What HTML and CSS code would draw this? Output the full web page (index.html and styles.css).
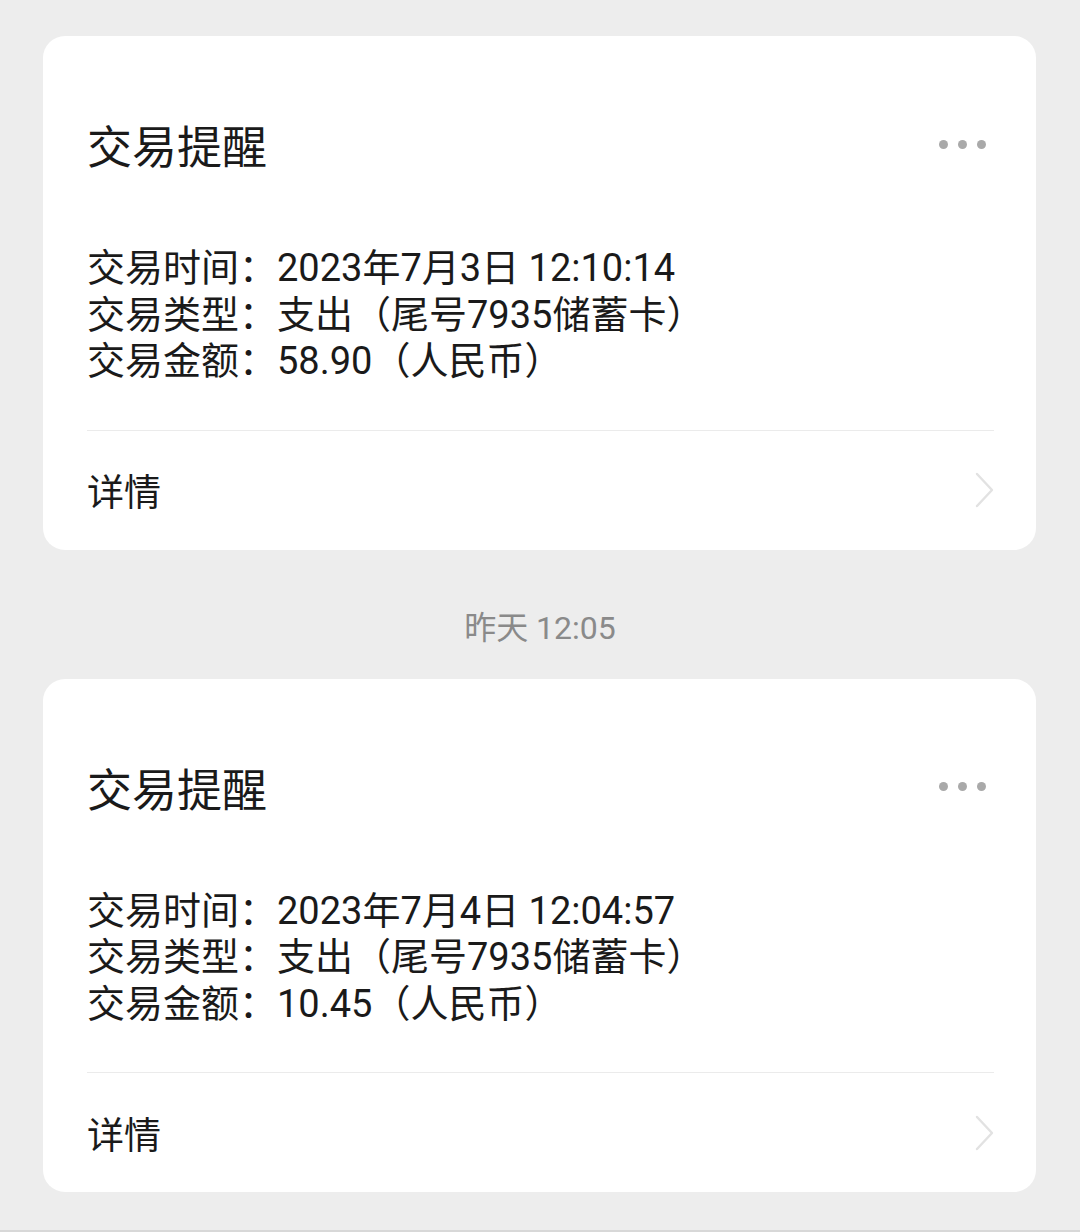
FILE: index.html
```html
<!DOCTYPE html>
<html lang="zh-CN">
<head>
<meta charset="utf-8">
<title>交易提醒</title>
<link rel="stylesheet" href="styles.css">
</head>
<body>
<main class="page">
  <section class="card">
    <div class="card-head">
      <h2 class="card-title">交易提醒</h2>
      <span class="more" aria-label="更多"><i></i><i></i><i></i></span>
    </div>
    <div class="card-body">
      <p class="line">交易时间：2023年7月3日 12:10:14</p>
      <p class="line">交易类型：支出（尾号7935储蓄卡）</p>
      <p class="line">交易金额：58.90（人民币）</p>
    </div>
    <div class="card-foot">
      <span class="detail">详情</span>
      <svg class="chev" width="20" height="36" viewBox="0 0 20 36"><path d="M2 2 L17 18 L2 34" fill="none" stroke="#e2e2e2" stroke-width="2.4" stroke-linecap="round" stroke-linejoin="round"/></svg>
    </div>
  </section>

  <div class="stamp">昨天 12:05</div>

  <section class="card">
    <div class="card-head">
      <h2 class="card-title">交易提醒</h2>
      <span class="more" aria-label="更多"><i></i><i></i><i></i></span>
    </div>
    <div class="card-body">
      <p class="line">交易时间：2023年7月4日 12:04:57</p>
      <p class="line">交易类型：支出（尾号7935储蓄卡）</p>
      <p class="line">交易金额：10.45（人民币）</p>
    </div>
    <div class="card-foot">
      <span class="detail">详情</span>
      <svg class="chev" width="20" height="36" viewBox="0 0 20 36"><path d="M2 2 L17 18 L2 34" fill="none" stroke="#e2e2e2" stroke-width="2.4" stroke-linecap="round" stroke-linejoin="round"/></svg>
    </div>
  </section>

  <div class="bottom-bar"></div>
</main>
</body>
</html>
```

FILE: styles.css
```css
html, body {
  margin: 0;
  padding: 0;
  background: #ededed;
}
body {
  font-family: "Noto Sans CJK SC", "Noto Sans", sans-serif;
  color: #1a1a1a;
  height: 1232px;
  overflow: hidden;
}
.page {
  display: flex;
  flex-direction: column;
  padding-top: 36px;
}
.card {
  margin: 0 44px 0 43px;
  background: #ffffff;
  border-radius: 22px;
  display: flex;
  flex-direction: column;
}
.card-head {
  display: flex;
  align-items: center;
  justify-content: space-between;
  padding: 79px 50px 0 44px;
  height: 60px;
}
.card-title {
  margin: 0;
  font-size: 45px;
  font-weight: 400;
  line-height: 60px;
}
.more {
  display: flex;
  gap: 10px;
  align-items: center;
  margin-top: -2px;
}
.more i {
  display: block;
  width: 9px;
  height: 9px;
  border-radius: 50%;
  background: #a9a9a9;
}
.card-body {
  padding: 70px 44px 0 44px;
}
.line {
  margin: 0;
  font-family: Roboto, "Noto Sans CJK SC", sans-serif;
  font-size: 38px;
  line-height: 46.5px;
  white-space: nowrap;
}
.card-foot {
  margin: 45px 42px 0 44px;
  border-top: 1px solid #ebebeb;
  height: 119px;
  display: flex;
  align-items: center;
  justify-content: space-between;
}
.detail {
  font-size: 37px;
  line-height: 50px;
}
.chev {
  display: block;
  margin-right: -1px;
}
.stamp {
  margin: 58px 0 31px;
  text-align: center;
  font-family: Roboto, "Noto Sans CJK SC", sans-serif;
  font-size: 32px;
  line-height: 40px;
  color: #8a8a8a;
}
.bottom-bar {
  margin-top: 38px;
  border-top: 2px solid #d8d8d8;
  height: 10px;
  background: #f5f5f5;
}
```
